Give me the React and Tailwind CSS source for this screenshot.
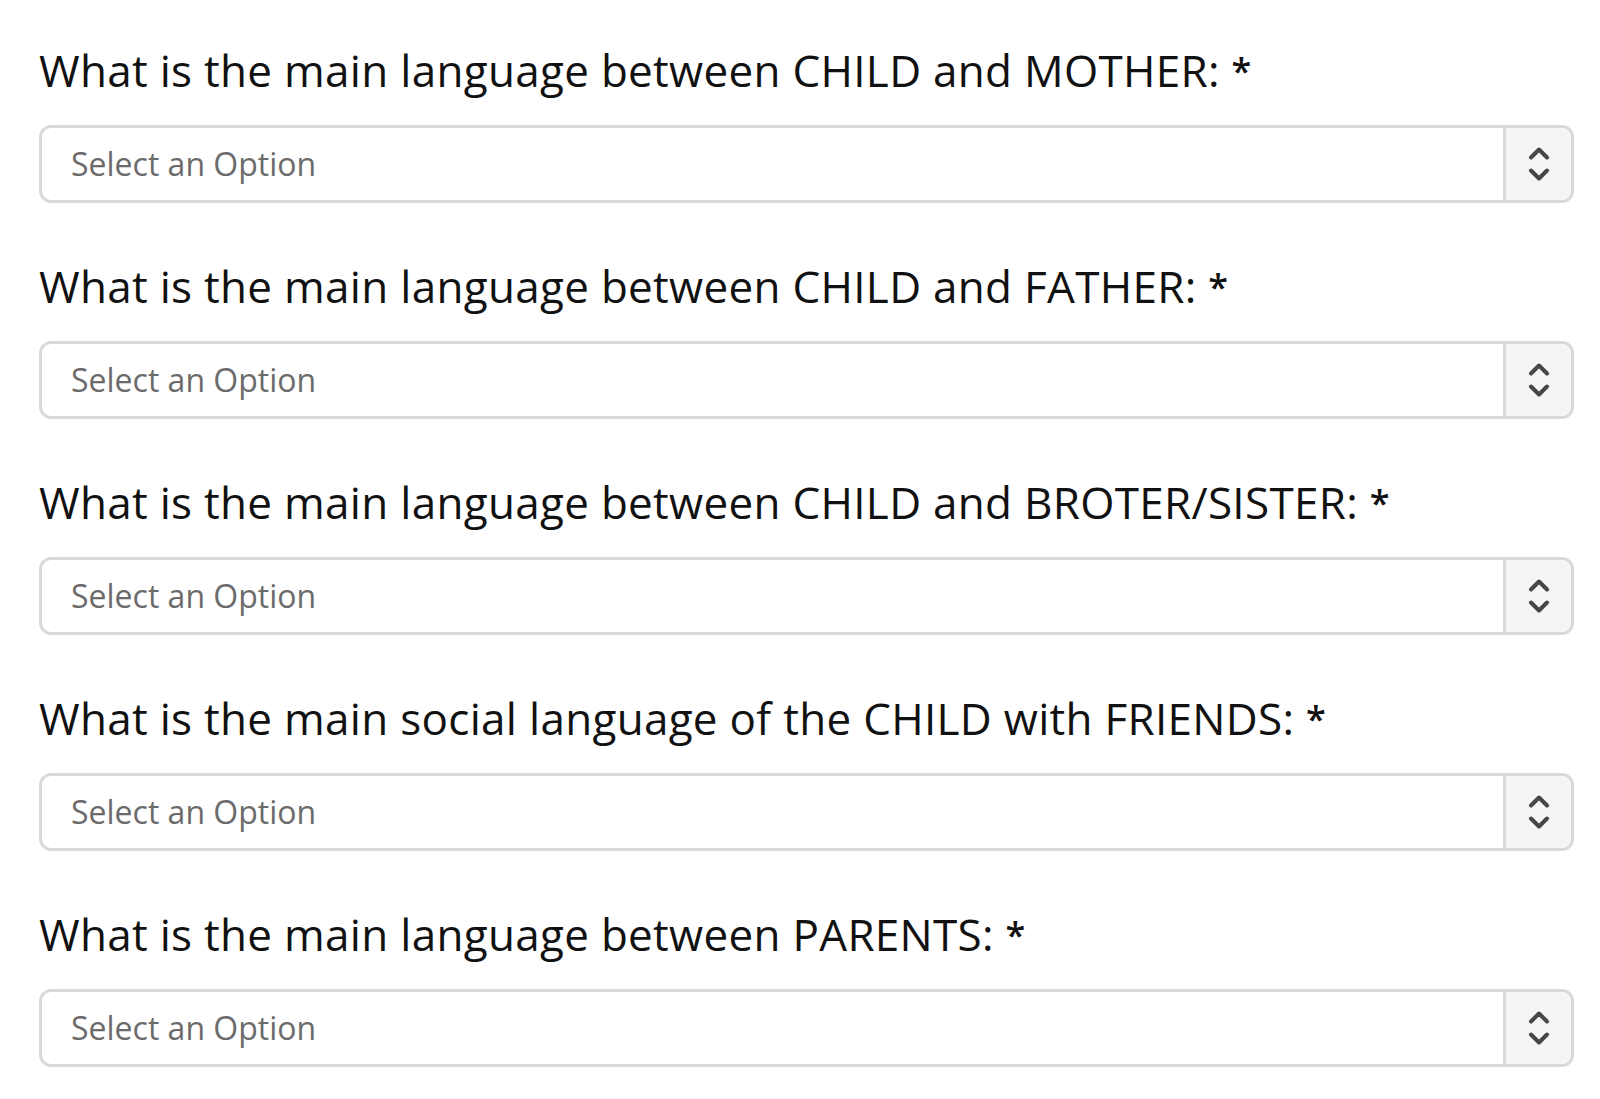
import React from 'react';

const questions = [
  'What is the main language between CHILD and MOTHER:',
  'What is the main language between CHILD and FATHER:',
  'What is the main language between CHILD and BROTER/SISTER:',
  'What is the main social language of the CHILD with FRIENDS:',
  'What is the main language between PARENTS:',
];

function SelectBox() {
  return (
    <div className="flex h-[78px] w-full items-stretch rounded-[12px] border-[3px] border-[#d9d9d9] bg-white overflow-hidden">
      <div className="flex flex-1 items-center pl-[29px] text-[32px] text-[#6b6b6b]">Select an Option</div>
      <div className="flex w-[68px] flex-col items-center justify-center gap-[8px] border-l-[3px] border-[#d9d9d9] bg-[#f4f5f7]">
        <svg width="22" height="13" viewBox="0 0 22 13" fill="none" stroke="#474747" strokeWidth="4" strokeLinecap="round" strokeLinejoin="round">
          <path d="M3 10.5 L11 2.5 L19 10.5" />
        </svg>
        <svg width="22" height="13" viewBox="0 0 22 13" fill="none" stroke="#474747" strokeWidth="4" strokeLinecap="round" strokeLinejoin="round">
          <path d="M3 2.5 L11 10.5 L19 2.5" />
        </svg>
      </div>
    </div>
  );
}

export default function App() {
  return (
    <div className="min-h-screen bg-white px-[39px] pt-[44px] pr-[26px]" style={{ fontFamily: '"Open Sans", sans-serif' }}>
      {questions.map((q) => (
        <div key={q} className="mb-[57px]">
          <label className="mb-[28px] block text-[44px] leading-[53px] tracking-[0.3px] text-[#111]">
            {q} <span className="align-top text-[36px] font-semibold">*</span>
          </label>
          <SelectBox />
        </div>
      ))}
    </div>
  );
}
